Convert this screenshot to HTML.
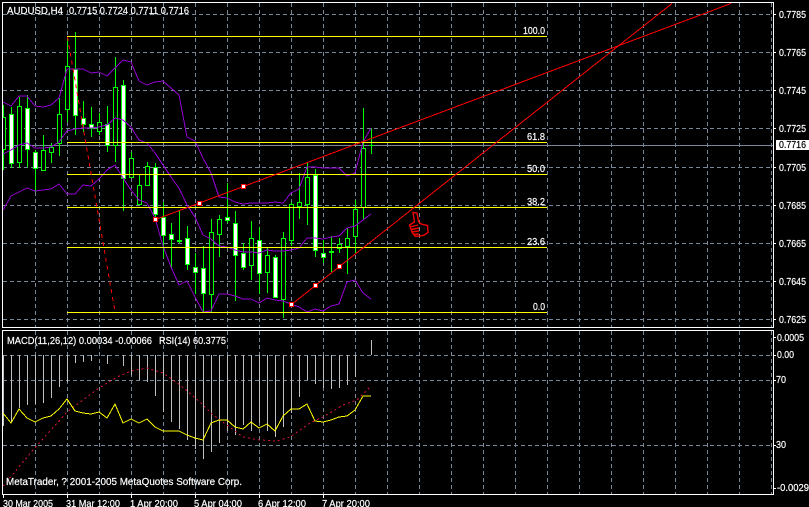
<!DOCTYPE html>
<html><head><meta charset="utf-8"><title>AUDUSD,H4</title>
<style>
html,body{margin:0;padding:0;background:#000;width:809px;height:507px;overflow:hidden}
svg{display:block}
text{font-family:"Liberation Sans",sans-serif;font-size:10.5px;fill:#fff;stroke:#fff;stroke-width:.2px}
.c{shape-rendering:crispEdges;fill:none}
</style></head><body>
<svg width="809" height="507" viewBox="0 0 809 507" xmlns="http://www.w3.org/2000/svg">
<defs>
<clipPath id="m"><rect x="3" y="3" width="770" height="324"/></clipPath>
<clipPath id="s"><rect x="3" y="331" width="770" height="163"/></clipPath>
</defs>
<rect width="809" height="507" fill="#000"/>

<!-- grid -->
<path class="c" stroke="#778899" stroke-dasharray="4 3" d="M35.5 3V327M67.5 3V327M99.5 3V327M131.5 3V327M163.5 3V327M195.5 3V327M227.5 3V327M259.5 3V327M291.5 3V327M323.5 3V327M355.5 3V327M387.5 3V327M419.5 3V327M451.5 3V327M483.5 3V327M515.5 3V327M547.5 3V327M579.5 3V327M611.5 3V327M643.5 3V327M675.5 3V327M707.5 3V327M739.5 3V327M771.5 3V327
M35.5 331V494M67.5 331V494M99.5 331V494M131.5 331V494M163.5 331V494M195.5 331V494M227.5 331V494M259.5 331V494M291.5 331V494M323.5 331V494M355.5 331V494M387.5 331V494M419.5 331V494M451.5 331V494M483.5 331V494M515.5 331V494M547.5 331V494M579.5 331V494M611.5 331V494M643.5 331V494M675.5 331V494M707.5 331V494M739.5 331V494M771.5 331V494"/>
<path class="c" stroke="#778899" stroke-dasharray="4 3" d="M3 14.5H773M3 52.5H773M3 90.5H773M3 128.5H773M3 167.5H773M3 205.5H773M3 243.5H773M3 281.5H773M3 319.5H773M3 355.5H773M3 380.5H773M3 445.5H773"/>
<path class="c" stroke="#778899" d="M3 145.5H773"/>

<g clip-path="url(#m)">
<!-- wicks -->
<path class="c" stroke="#00ff00" d="M3.5 105V170M11.5 107V168M19.5 97V168M27.5 95V167M35.5 150V192M43.5 135V170M51.5 143V163M59.5 98V156M67.5 39V122M75.5 32V135M83.5 101V132M91.5 107V137M99.5 113V135M107.5 106V152M115.5 57V162M123.5 80V211M131.5 152V177M139.5 175V204M147.5 162V185M155.5 163V222M163.5 202V258M171.5 223V268M179.5 210V243M187.5 226V270M195.5 253V294M203.5 246V312M211.5 219V313M219.5 215V257M227.5 183V223M235.5 211V301M243.5 243V270M251.5 221V280M259.5 227V294M267.5 248V293M275.5 255V297M283.5 232V318M291.5 202V246M299.5 173V219M307.5 163V225M315.5 169V257M323.5 240V263M331.5 236V272M339.5 238V253M347.5 228V274M355.5 200V253M363.5 108V219M371.5 128V154M369 145.5H374"/>
<!-- hollow bodies -->
<path class="c" style="fill:#000" stroke="#00ff00" d="M1.5 117.5h4v32h-4zM17.5 106.5h4v56h-4zM41.5 150.5h4v20h-4zM49.5 147.5h4v5h-4zM57.5 114.5h4v29h-4zM65.5 66.5h4v43h-4zM97.5 122.5h4v9h-4zM113.5 87.5h4v58h-4zM129.5 158.5h4v19h-4zM137.5 185.5h4v19h-4zM145.5 166.5h4v19h-4zM209.5 232.5h4v62h-4zM217.5 219.5h4v15h-4zM249.5 238.5h4v27h-4zM265.5 255.5h4v17h-4zM281.5 238.5h4v61h-4zM289.5 204.5h4v36h-4zM297.5 202.5h4v4h-4zM305.5 177.5h4v27h-4zM337.5 244.5h4v4h-4zM345.5 238.5h4v8h-4zM353.5 209.5h4v27h-4zM361.5 148.5h4v59h-4z"/>
<!-- white bodies -->
<path class="c" style="fill:#fff" stroke="#00ff00" d="M9.5 114.5h4v49h-4zM25.5 108.5h4v41h-4zM33.5 152.5h4v16h-4zM73.5 69.5h4v46h-4zM81.5 118.5h4v6h-4zM89.5 124.5h4v4h-4zM105.5 124.5h4v21h-4zM121.5 85.5h4v93h-4zM153.5 167.5h4v47h-4zM161.5 217.5h4v18h-4zM169.5 234.5h4v5h-4zM185.5 238.5h4v26h-4zM193.5 267.5h4v5h-4zM201.5 268.5h4v25h-4zM225.5 217.5h4v3h-4zM233.5 223.5h4v32h-4zM241.5 253.5h4v14h-4zM257.5 240.5h4v33h-4zM273.5 257.5h4v40h-4zM313.5 175.5h4v75h-4zM321.5 253.5h4v4h-4z"/>
<path class="c" style="fill:#00ff00" d="M177 240h5v2h-5zM329 251h5v2h-5z"/>

<!-- bollinger -->
<polyline class="c" stroke="#9400d3" points="3,102 11,106 19,96 27,96 35,106 43,107 51,105 59,98 67,69 75,69 83,69 91,73 99,72 107,76 115,68 123,60 131,62 139,81 147,85 155,82 163,81 171,88 179,95 187,137 195,141 203,158 211,173 219,197 227,198 235,202 243,204 251,203 259,203 267,203 275,202 283,203 291,193 299,189 307,167 315,167 323,168 331,168 339,168 347,176 355,173 363,142 371,128"/>
<polyline class="c" stroke="#9400d3" points="3,154 11,150 19,145 27,143 35,148 43,148 51,147 59,142 67,131 75,129 83,128 91,128 99,127 107,125 115,118 123,120 131,127 139,140 147,143 155,153 163,165 171,177 179,188 187,205 195,217 203,235 211,239 219,246 227,247 235,250 243,252 251,252 259,253 267,250 275,251 283,251 291,250 299,248 307,238 315,238 323,239 331,237 339,236 347,228 355,226 363,220 371,214"/>
<polyline class="c" stroke="#9400d3" points="3,210 11,196 19,192 27,188 35,191 43,190 51,189 59,184 67,194 75,194 83,185 91,186 99,179 107,170 115,165 123,178 131,190 139,200 147,203 155,218 163,246 171,267 179,285 187,281 195,297 203,312 211,311 219,294 227,294 235,296 243,299 251,299 259,303 267,298 275,300 283,301 291,304 299,307 307,312 315,309 323,311 331,306 339,304 347,282 355,280 363,293 371,299"/>

<!-- fibo -->
<path class="c" stroke="#ffff00" d="M67 36.5H547M67 142.5H547M67 174.5H547M67 207.5H547M67 247.5H547M67 312.5H547"/>

<!-- red lines -->
<path class="c" stroke="#ff0000" stroke-dasharray="4 4" d="M67.5 37L114.5 309"/>
<path class="c" stroke="#ff0000" d="M155.5 219.5L731 3.5M291.5 304.5L672 3.5"/>
<path class="c" style="fill:#fff" stroke="#ff0000" d="M153.5 217.5h4v4h-4zM197.5 201.5h4v4h-4zM241.5 184.5h4v4h-4zM289.5 302.5h4v4h-4zM313.5 283.5h4v4h-4zM337.5 264.5h4v4h-4z"/>

<!-- thumb -->
<g fill="none" stroke="#f00000" stroke-width="1.4">
<path d="M413 212.5L417 213L418.5 221.5L421 224L427.5 225.5L428 232.5L423.5 235.5L415.5 236.5L412.5 233L409.5 225L414.5 222Z"/>
<path d="M410 227L418 225M411 229.5L419 228M411.5 232L419 231M413 234.5L419 234"/>
</g>
</g>

<g clip-path="url(#s)">
<!-- histogram -->
<path class="c" stroke="#c0c0c0" d="M3.5 355V426M11.5 355V422M19.5 355V408M27.5 355V405M35.5 355V404M43.5 355V403M51.5 355V398M59.5 355V387M67.5 355V382M75.5 355V363M83.5 355V362M91.5 355V361M107.5 355V364M123.5 355V366M131.5 355V375M139.5 355V380M147.5 355V382M155.5 355V396M163.5 355V412M171.5 355V422M179.5 355V429M187.5 355V440M195.5 355V449M203.5 355V459M211.5 355V452M219.5 355V443M227.5 355V431M235.5 355V435M243.5 355V425M251.5 355V431M259.5 355V423M267.5 355V431M275.5 355V437M283.5 355V427M291.5 355V413M299.5 355V397M307.5 355V380M315.5 355V384M323.5 355V388M331.5 355V389M339.5 355V388M347.5 355V385M355.5 355V377M371.5 340V355"/>
<!-- signal -->
<polyline class="c" stroke="#dc143c" stroke-dasharray="2 3" points="3,486 33,450 67,412 99,388 117,377 131,371 147,368 163,373 180,385 200,402 213,415 227,425 243,437 260,440 277,441 290,437 310,423 323,417 343,405 357,400 370,387"/>
<!-- rsi -->
<polyline class="c" stroke="#ffff00" points="3,413 11,423 19,409 27,418 35,422 43,418 51,416 59,409 67,399 75,411 83,413 91,414 99,412 107,418 115,404 123,423 131,419 139,423 147,419 155,427 163,431 171,431 179,431 187,435 195,438 203,440 211,423 219,420 227,420 235,427 243,429 251,422 259,428 267,424 275,431 283,416 291,409 299,409 307,404 315,421 323,422 331,420 339,417 347,416 355,410 363,396 371,396"/>
</g>

<!-- frames -->
<path class="c" stroke="#fff" d="M2.5 2.5H773.5V327.5H2.5ZM2.5 330.5H773.5V494.5H2.5Z"/>
<!-- ticks -->
<path class="c" stroke="#fff" d="M773 14.5h3M773 52.5h3M773 90.5h3M773 128.5h3M773 167.5h3M773 205.5h3M773 243.5h3M773 281.5h3M773 319.5h3M773 337.5h3M773 355.5h3M773 380.5h3M773 445.5h3M773 488.5h3M3.5 494V498M67.5 494V498M131.5 494V498M195.5 494V498M259.5 494V498M323.5 494V498"/>

<!-- chart text -->
<text x="7" y="14" textLength="56" lengthAdjust="spacingAndGlyphs">AUDUSD,H4</text>
<text x="69" y="14" textLength="120" lengthAdjust="spacingAndGlyphs">0.7715 0.7724 0.7711 0.7716</text>
<text x="523" y="34" textLength="22" lengthAdjust="spacingAndGlyphs">100.0</text>
<text x="527" y="140" textLength="18" lengthAdjust="spacingAndGlyphs">61.8</text>
<text x="527" y="172" textLength="18" lengthAdjust="spacingAndGlyphs">50.0</text>
<text x="527" y="205" textLength="18" lengthAdjust="spacingAndGlyphs">38.2</text>
<text x="527" y="245" textLength="18" lengthAdjust="spacingAndGlyphs">23.6</text>
<text x="533" y="310" textLength="12" lengthAdjust="spacingAndGlyphs">0.0</text>
<text x="7" y="344" textLength="145" lengthAdjust="spacingAndGlyphs">MACD(11,26,12) 0.00034 -0.00066</text>
<text x="159" y="344" textLength="67" lengthAdjust="spacingAndGlyphs">RSI(14) 60.3775</text>
<text x="6" y="485" textLength="236" lengthAdjust="spacingAndGlyphs">MetaTrader, ? 2001-2005 MetaQuotes Software Corp.</text>

<!-- right axis -->
<text x="779" y="18" textLength="27" lengthAdjust="spacingAndGlyphs">0.7785</text>
<text x="779" y="56" textLength="27" lengthAdjust="spacingAndGlyphs">0.7765</text>
<text x="779" y="94" textLength="27" lengthAdjust="spacingAndGlyphs">0.7745</text>
<text x="779" y="132" textLength="27" lengthAdjust="spacingAndGlyphs">0.7725</text>
<text x="779" y="171" textLength="27" lengthAdjust="spacingAndGlyphs">0.7705</text>
<text x="779" y="209" textLength="27" lengthAdjust="spacingAndGlyphs">0.7685</text>
<text x="779" y="247" textLength="27" lengthAdjust="spacingAndGlyphs">0.7665</text>
<text x="779" y="285" textLength="27" lengthAdjust="spacingAndGlyphs">0.7645</text>
<text x="779" y="323" textLength="27" lengthAdjust="spacingAndGlyphs">0.7625</text>
<rect x="776" y="140" width="33" height="10" fill="#fff"/>
<text x="779" y="148" textLength="27" lengthAdjust="spacingAndGlyphs" style="fill:#000;stroke:#000">0.7716</text>
<text x="777" y="341" textLength="27" lengthAdjust="spacingAndGlyphs">0.0005</text>
<text x="777" y="358" textLength="17" lengthAdjust="spacingAndGlyphs">0.00</text>
<text x="776" y="383" textLength="10" lengthAdjust="spacingAndGlyphs">70</text>
<text x="776" y="448" textLength="10" lengthAdjust="spacingAndGlyphs">30</text>
<text x="777" y="491" textLength="32" lengthAdjust="spacingAndGlyphs">-0.0029</text>

<!-- time axis -->
<text x="3" y="507" textLength="50" lengthAdjust="spacingAndGlyphs">30 Mar 2005</text>
<text x="66" y="507" textLength="54" lengthAdjust="spacingAndGlyphs">31 Mar 12:00</text>
<text x="130" y="507" textLength="48" lengthAdjust="spacingAndGlyphs">1 Apr 20:00</text>
<text x="194" y="507" textLength="48" lengthAdjust="spacingAndGlyphs">5 Apr 04:00</text>
<text x="258" y="507" textLength="48" lengthAdjust="spacingAndGlyphs">6 Apr 12:00</text>
<text x="322" y="507" textLength="48" lengthAdjust="spacingAndGlyphs">7 Apr 20:00</text>
</svg>
</body></html>
